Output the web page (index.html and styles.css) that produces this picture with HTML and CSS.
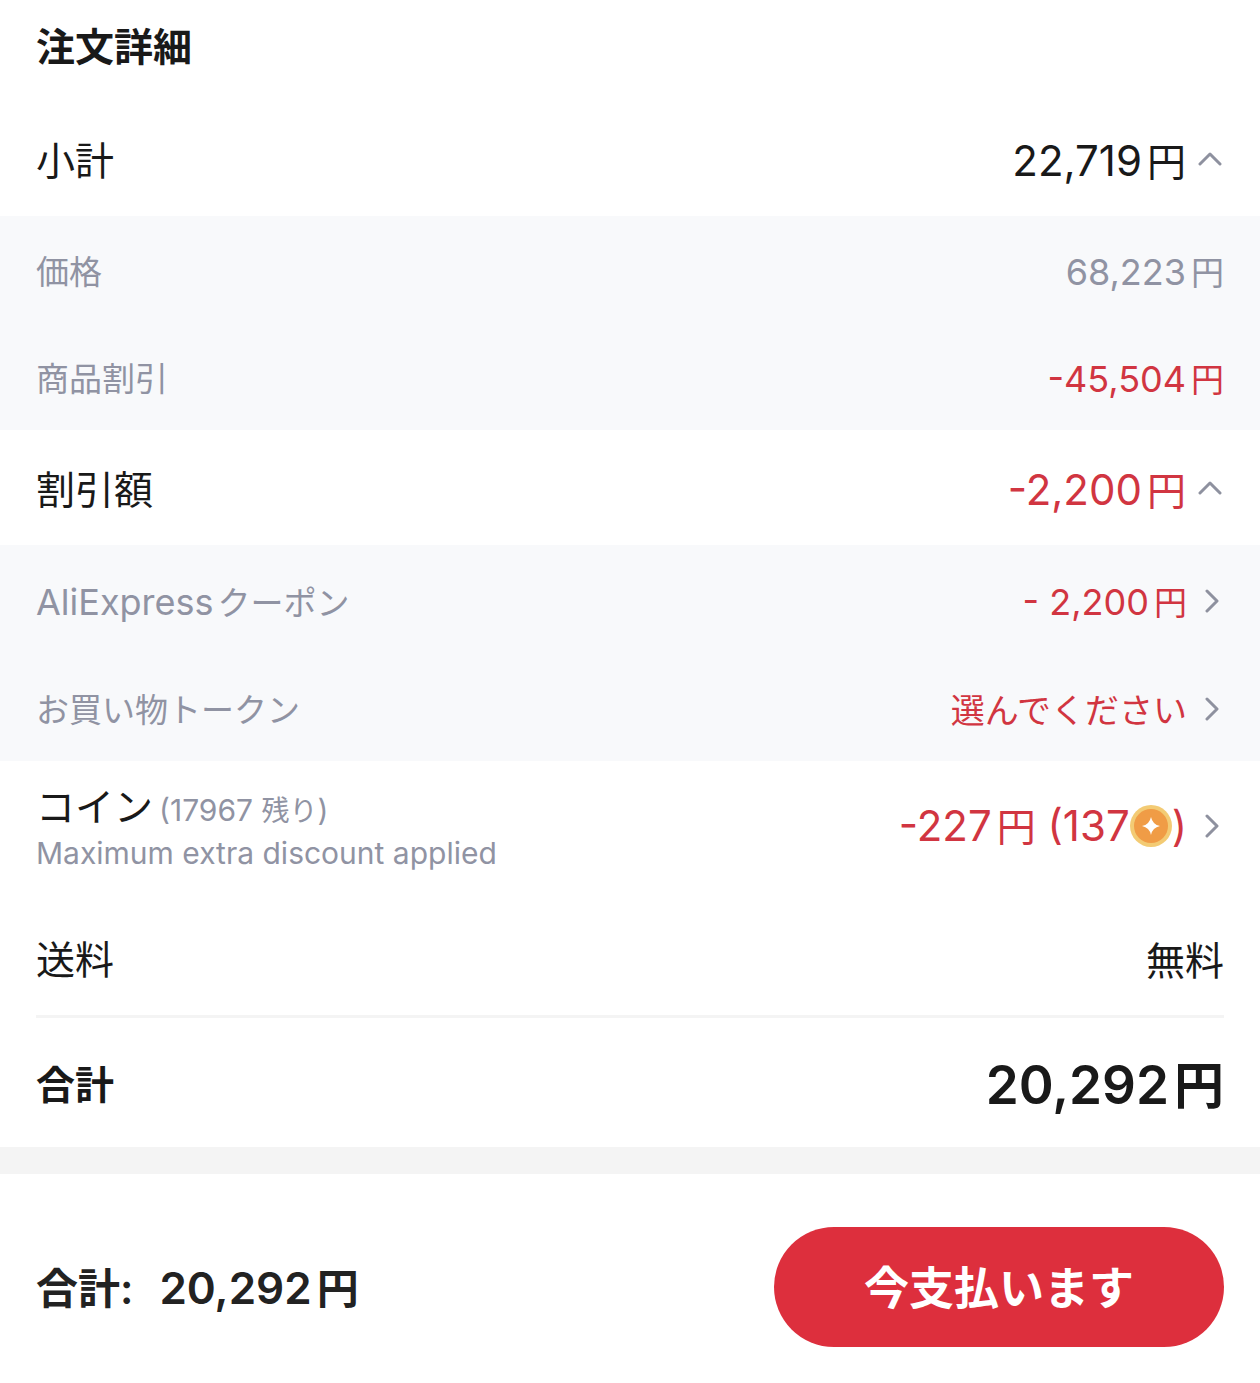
FILE: index.html
```html
<!DOCTYPE html>
<html lang="ja">
<head>
	<meta charset="UTF-8">
	<meta name="viewport" content="width=device-width, initial-scale=1">
	<title>注文詳細</title>
	<link rel="stylesheet" href="styles.css">
</head>
<body>
	<main class="order">
		<h1 class="title">注文詳細</h1>

		<button type="button" class="row main" aria-expanded="true">
			<span class="label">小計</span>
			<span class="value">22,719<span class="yen">円</span></span>
			<svg class="up" viewBox="0 0 24 14"><path d="M2 12L12 2L22 12"/></svg>
		</button>
		<div class="detail">
			<div class="row">
				<span class="label">価格</span>
				<span class="value">68,223<span class="yen">円</span></span>
			</div>
			<div class="row">
				<span class="label">商品割引</span>
				<span class="value red">-45,504<span class="yen">円</span></span>
			</div>
		</div>

		<button type="button" class="row main" aria-expanded="true">
			<span class="label">割引額</span>
			<span class="value red">-2,200<span class="yen">円</span></span>
			<svg class="up" viewBox="0 0 24 14"><path d="M2 12L12 2L22 12"/></svg>
		</button>
		<div class="detail">
			<a href="#coupon" class="row pick">
				<span class="label"><span class="latin">AliExpress</span>クーポン</span>
				<span class="value red">- 2,200<span class="yen">円</span></span>
				<svg class="next" viewBox="0 0 14 24"><path d="M2 2L12 12L2 22"/></svg>
			</a>
			<a href="#token" class="row pick">
				<span class="label">お買い物トークン</span>
				<span class="value red"><span class="jp">選んでください</span></span>
				<svg class="next" viewBox="0 0 14 24"><path d="M2 2L12 12L2 22"/></svg>
			</a>
		</div>

		<a href="#coin" class="row main coins">
			<span class="label">
				<span class="name">コイン<small class="left">(17967 <span class="jp">残り</span>)</small></span>
				<small class="note">Maximum extra discount applied</small>
			</span>
			<span class="value red">-227<span class="yen">円</span> (137<svg class="coin" viewBox="0 0 42 42"><circle cx="21" cy="21" r="21" fill="#f3cb74"/><circle cx="21" cy="21" r="17" fill="#f09c46"/><path d="M21 12Q22.500 19.500 30 21Q22.500 22.500 21 30Q19.500 22.500 12 21Q19.500 19.500 21 12Z" fill="#fff"/></svg>)</span>
			<svg class="next" viewBox="0 0 14 24"><path d="M2 2L12 12L2 22"/></svg>
		</a>

		<div class="row main">
			<span class="label">送料</span>
			<span class="value"><span class="jp">無料</span></span>
		</div>
		<hr class="line">
		<div class="row total">
			<span class="label">合計</span>
			<span class="value">20,292<span class="yen">円</span></span>
		</div>
	</main>

	<footer class="pay">
		<p class="sum">
			<span class="jp">合計:</span>
			<span class="price">20,292<span class="yen">円</span></span>
		</p>
		<button type="button" class="pay-btn">今支払います</button>
	</footer>
</body>
</html>
```
FILE: styles.css
```css
*{
	box-sizing: border-box;
}
body{
	margin: 0;
	background: #fff;
	color: #191919;
	font-family: Inter, "Noto Sans CJK JP", sans-serif;
}
button{
	border: 0;
	background: none;
	font-family: inherit;
	cursor: pointer;
}
.order{
	border-bottom: 27px solid #f4f4f4;
}
.title{
	margin: 0;
	padding: 18px 36px 25px;
	font-size: 39px;
	line-height: 58px;
	font-weight: 700;
}
.row{
	display: flex;
	align-items: center;
	width: 100%;
	min-height: 107px;
	padding: 5px 36px 0;
	color: #9093a3;
	font-size: 33px;
	line-height: 48px;
	text-align: left;
	text-decoration: none;
}
.label{
	flex: 1;
}
.latin{
	margin-right: 4px;
	font-size: 36px;
}
.value{
	font-size: 36px;
	white-space: nowrap;
}
.yen{
	margin-left: 5px;
	font-size: 33px;
}
.jp{
	font-size: 34px;
}
.row .red{
	color: #d13541;
}
.detail{
	background: #f8f9fb;
}
.pick{
	min-height: 108px;
	padding-top: 6px;
}
.main{
	min-height: 115px;
	color: #191919;
	font-size: 39px;
}
.main .value{
	font-size: 42px;
}
.main .yen,.main .value .jp{
	font-size: 39px;
}

/* arrows */
.up,.next{
	fill: none;
	stroke: #8e919f;
	stroke-width: 3;
	stroke-linecap: round;
	stroke-linejoin: round;
}
.up{
	width: 24px;
	height: 14px;
	margin: 0 2px 5px 12px;
}
.next{
	width: 14px;
	height: 24px;
	margin: 0 5px 2px 18px;
}

/* coins */
.coins{
	min-height: 139px;
	padding-top: 0;
	padding-bottom: 8px;
}
.name,.note{
	display: block;
}
.left,.note{
	color: #9093a3;
	font-size: 30px;
}
.left{
	margin-left: 6px;
}
.note{
	line-height: 36px;
}
.left .jp{
	font-size: 28px;
}
.coin{
	width: 42px;
	height: 42px;
	vertical-align: -6px;
}

.line{
	height: 3px;
	margin: 0 36px;
	border: 0;
	background: #f4f4f4;
}
.total{
	min-height: 129px;
	color: #191919;
	font-size: 39px;
	font-weight: 700;
}
.total .value{
	font-size: 53px;
	font-weight: 600;
}
.total .yen{
	font-size: 50px;
}

/* bottom bar */
.pay{
	display: flex;
	align-items: center;
	justify-content: space-between;
	padding: 53px 36px 36px;
}
.sum{
	display: flex;
	align-items: baseline;
	gap: 26px;
	margin: 0;
	padding-bottom: 4px;
	color: #222;
	font-size: 44px;
	font-weight: 600;
}
.sum .jp,.sum .yen{
	font-size: 42px;
}
.pay-btn{
	width: 450px;
	height: 120px;
	padding-bottom: 4px;
	border-radius: 60px;
	background: #dd2f3d;
	color: #fff;
	font-size: 45px;
	font-weight: 700;
}
```
